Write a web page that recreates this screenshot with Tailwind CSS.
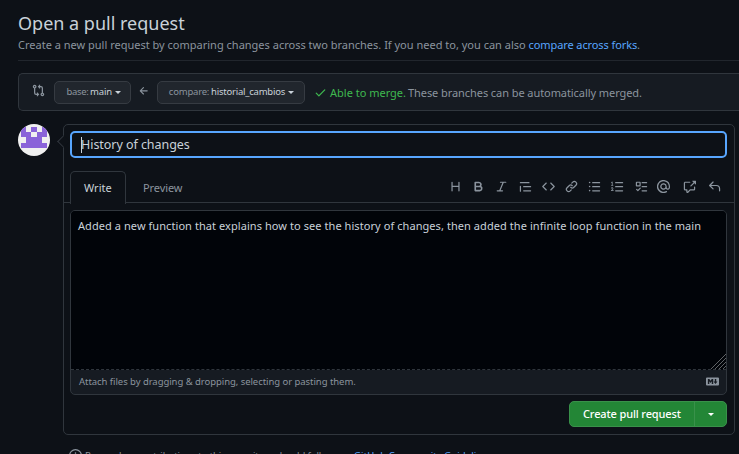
<!DOCTYPE html>
<html lang="en">
<head>
<meta charset="utf-8">
<title>Open a pull request</title>
<script src="https://cdn.jsdelivr.net/npm/@tailwindcss/browser@4"></script>
</head>
<body class="h-[454px] w-[739px] overflow-hidden bg-[#0d1117] font-['Noto_Sans',sans-serif] text-[11px] text-[#8b949e]">
<header class="ml-[18px] h-[61px] border-b border-[#21262d] pt-[11px] whitespace-nowrap">
  <h1 class="h-[25px] text-[18px] leading-[25px] text-[#c9d1d9]">Open a pull request</h1>
  <p class="h-[18px] leading-[18px] tracking-[0.002px]">Create a new pull request by comparing changes across two branches. If you need to, you can also <a class="tracking-[-0.1px] text-[#58a6ff]">compare across forks</a>.</p>
</header>
<section class="mt-3 ml-[18px] flex h-[38px] items-center rounded-l-[5px] border border-r-0 border-[#30363d] bg-[#161b22] whitespace-nowrap">
  <svg class="mt-[-4px] ml-[13px] size-[13px]" viewBox="0 0 16 16" fill="currentColor"><path d="M9.573.677A.25.25 0 0 1 10 .854V2.5h1A2.5 2.5 0 0 1 13.5 5v5.628a2.251 2.251 0 1 1-1.5 0V5a1 1 0 0 0-1-1h-1v1.646a.25.25 0 0 1-.427.177L7.177 3.427a.25.25 0 0 1 0-.354L9.573.677ZM6 12v-1.646a.25.25 0 0 1 .427-.177l2.396 2.396a.25.25 0 0 1 0 .354l-2.396 2.396A.25.25 0 0 1 6 15.146V13.5H5A2.5 2.5 0 0 1 2.5 11V5.372a2.25 2.25 0 1 1 1.5 0V11a1 1 0 0 0 1 1h1Zm-2.75-9.5a.75.75 0 1 0 0 1.5.75.75 0 0 0 0-1.5Zm9.5 9.5a.75.75 0 1 0 0 1.5.75.75 0 0 0 0-1.5Z"/></svg>
  <button class="ml-[9px] flex h-[23px] w-[77px] items-center rounded-[5px] border border-[#363b42] bg-[#21262d] pt-px pl-[10px] text-[9.5px] tracking-[-0.1px]"><span class="w-[25px] tracking-[-0.35px]">base:</span><span class="w-[22px] text-[#c9d1d9]">main</span><i class="ml-[3px] border-x-[3px] border-t-[3px] border-x-transparent border-t-[#c9d1d9]"></i></button>
  <svg class="mt-[-3px] ml-[7px] size-[12px]" viewBox="0 0 16 16" fill="currentColor"><path d="M7.78 12.53a.75.75 0 0 1-1.06 0L2.47 8.28a.75.75 0 0 1 0-1.06l4.25-4.25a.751.751 0 0 1 1.042.018.751.751 0 0 1 .018 1.042L4.81 7h7.44a.75.75 0 0 1 0 1.5H4.81l2.97 2.97a.75.75 0 0 1 0 1.06Z"/></svg>
  <button class="ml-[7px] flex h-[23px] w-[148px] items-center rounded-[5px] border border-[#363b42] bg-[#21262d] pt-px pl-[9px] text-[9.5px] tracking-[-0.1px]"><span class="w-[44px] tracking-[-0.2px]">compare:</span><span class="w-[74px] tracking-[-0.22px] text-[#c9d1d9]">historial_cambios</span><i class="ml-[3px] border-x-[3px] border-t-[3px] border-x-transparent border-t-[#c9d1d9]"></i></button>
  <svg class="ml-[9px] size-[13px] text-[#3fb950]" viewBox="0 0 16 16" fill="currentColor"><path d="M13.78 4.22a.75.75 0 0 1 0 1.06l-7.25 7.25a.75.75 0 0 1-1.06 0L2.22 9.28a.751.751 0 0 1 .018-1.042.751.751 0 0 1 1.042-.018L6 10.94l6.72-6.72a.75.75 0 0 1 1.06 0Z"/></svg>
  <span class="mt-[2px] ml-[3px] w-[76px] text-[#3fb950]">Able to merge.</span><span class="mt-[2px] ml-[2px] tracking-[-0.07px]">These branches can be automatically merged.</span>
</section>
<div class="mt-[13px] flex">
  <svg class="ml-[18px] size-8 rounded-full bg-[#f0f0f0]" viewBox="0 0 6 6" fill="#8a63d9" shape-rendering="crispEdges"><path d="M.5.5h1v1h1v-1h1v1h1v-1h1v2h-1v1h1v1h-5v-1h1v-1h-1z"/><path fill="#f0f0f0" d="M2.5 1.5h1v1h-1z"/></svg>
  <main class="relative ml-[13px] h-[311px] w-[672px] rounded-[5px] border border-[#30363d]">
    <i class="absolute top-[12px] left-[-5px] size-[9px] rotate-45 border-b border-l border-[#30363d] bg-[#0d1117]"></i>
    <div class="relative mt-[6px] ml-[6px] flex h-[27px] w-[657px] items-center rounded-[5px] border-2 border-[#58a6ff] bg-[#0d1117] pl-[9px] text-[12.5px] text-[#c9d1d9]"><i class="h-[16px] w-px bg-[#c9d1d9]"></i><span class="mt-[2px] ml-[-1px] tracking-[-0.05px]">History of changes</span></div>
    <div class="mt-[13px] flex h-8 items-center border-b border-[#30363d] pl-[6px]">
      <div class="mb-[-1px] flex h-[33px] w-[56px] items-center rounded-t-[5px] border border-b-0 border-[#30363d] bg-[#0d1117] pt-[2px] pl-[13px] text-[#c9d1d9]">Write</div>
      <span class="mt-[3px] ml-[17px] tracking-[-0.1px]">Preview</span>
      <div class="mt-[-1px] ml-auto flex items-center pr-[13px] [&>svg]:size-[13px] [&>svg]:fill-current">
        <svg viewBox="0 0 16 16"><path d="M3.75 2a.75.75 0 0 1 .75.75V7h7V2.75a.75.75 0 0 1 1.5 0v10.5a.75.75 0 0 1-1.5 0V8.5h-7v4.75a.75.75 0 0 1-1.5 0V2.75A.75.75 0 0 1 3.75 2Z"/></svg>
        <svg class="ml-[10px]" viewBox="0 0 16 16"><path d="M4 2h4.5a3.501 3.501 0 0 1 2.852 5.53A3.499 3.499 0 0 1 9.5 14H4a1 1 0 0 1-1-1V3a1 1 0 0 1 1-1Zm1 7v3h4.5a1.5 1.5 0 0 0 0-3Zm3.5-2a1.5 1.5 0 0 0 0-3H5v3Z"/></svg>
        <svg class="ml-[10px]" viewBox="0 0 16 16"><path d="M6 2.75A.75.75 0 0 1 6.75 2h6.5a.75.75 0 0 1 0 1.5h-2.505l-3.858 9H9.25a.75.75 0 0 1 0 1.5h-6.5a.75.75 0 0 1 0-1.5h2.505l3.858-9H6.75A.75.75 0 0 1 6 2.75Z"/></svg>
        <svg class="ml-[11px]" viewBox="0 0 16 16"><path d="M1.75 2.5h10.5a.75.75 0 0 1 0 1.5H1.75a.75.75 0 0 1 0-1.5Zm4 5h8.5a.75.75 0 0 1 0 1.5h-8.5a.75.75 0 0 1 0-1.5Zm0 5h8.5a.75.75 0 0 1 0 1.5h-8.5a.75.75 0 0 1 0-1.5ZM2.5 7.75v6a.75.75 0 0 1-1.5 0v-6a.75.75 0 0 1 1.5 0Z"/></svg>
        <svg class="ml-[10px]" viewBox="0 0 16 16"><path d="m11.28 3.22 4.25 4.25a.75.75 0 0 1 0 1.06l-4.25 4.25a.75.75 0 0 1-1.06-1.06L13.94 8l-3.72-3.72a.75.75 0 0 1 1.06-1.06Zm-6.56 0a.75.75 0 0 1 1.06 1.06L2.06 8l3.72 3.72a.75.75 0 0 1-1.06 1.06L.47 8.53a.75.75 0 0 1 0-1.06Z"/></svg>
        <svg class="ml-[10px]" viewBox="0 0 16 16"><path d="m7.775 3.275 1.25-1.25a3.5 3.5 0 1 1 4.95 4.95l-2.5 2.5a3.5 3.5 0 0 1-4.95 0 .751.751 0 0 1 1.06-1.06 1.998 1.998 0 0 0 2.83 0l2.5-2.5a2.002 2.002 0 0 0-2.83-2.83l-1.25 1.25a.751.751 0 0 1-1.06-1.06Zm-4.69 9.64a1.998 1.998 0 0 0 2.83 0l1.25-1.25a.751.751 0 0 1 1.06 1.06l-1.25 1.25a3.5 3.5 0 1 1-4.95-4.95l2.5-2.5a3.5 3.5 0 0 1 4.95 0 .751.751 0 0 1-1.06 1.06 1.998 1.998 0 0 0-2.83 0l-2.5 2.5a1.998 1.998 0 0 0 0 2.83Z"/></svg>
        <svg class="ml-[10px]" viewBox="0 0 16 16"><path d="M5.75 2.5h8.5a.75.75 0 0 1 0 1.5h-8.5a.75.75 0 0 1 0-1.5Zm0 5h8.5a.75.75 0 0 1 0 1.5h-8.5a.75.75 0 0 1 0-1.5Zm0 5h8.5a.75.75 0 0 1 0 1.5h-8.5a.75.75 0 0 1 0-1.5ZM2 14a1 1 0 1 1 0-2 1 1 0 0 1 0 2Zm1-6a1 1 0 1 1-2 0 1 1 0 0 1 2 0ZM2 4a1 1 0 1 1 0-2 1 1 0 0 1 0 2Z"/></svg>
        <svg class="ml-[10px]" viewBox="0 0 16 16"><path d="M5 3.25a.75.75 0 0 1 .75-.75h8.5a.75.75 0 0 1 0 1.5h-8.5A.75.75 0 0 1 5 3.25Zm0 5a.75.75 0 0 1 .75-.75h8.5a.75.75 0 0 1 0 1.5h-8.5A.75.75 0 0 1 5 8.25Zm0 5a.75.75 0 0 1 .75-.75h8.5a.75.75 0 0 1 0 1.5h-8.5a.75.75 0 0 1-.75-.75ZM.924 10.32a.5.5 0 0 1-.851-.525c.162-.266.506-.636 1.15-.728.436-.062.892.06 1.217.32.318.254.56.68.56 1.183 0 .57-.33 1-.61 1.26l-.73.67H3a.5.5 0 0 1 0 1H.5a.5.5 0 0 1-.34-.87l1.7-1.56c.3-.28.22-.8-.17-.96-.33-.13-.6-.02-.766.21ZM2.003 2.5V6h.503a.5.5 0 0 1 0 1H.5a.5.5 0 0 1 0-1h.503V3.308l-.28.14a.5.5 0 0 1-.446-.895l1.003-.5a.5.5 0 0 1 .723.447Z"/></svg>
        <svg class="ml-[11px]" viewBox="0 0 16 16"><path d="M2 2h4a1 1 0 0 1 1 1v4a1 1 0 0 1-1 1H2a1 1 0 0 1-1-1V3a1 1 0 0 1 1-1Zm.5 1.5v3h3v-3Zm6.25-1h5.5a.75.75 0 0 1 0 1.5h-5.5a.75.75 0 0 1 0-1.5Zm0 5h5.5a.75.75 0 0 1 0 1.5h-5.5a.75.75 0 0 1 0-1.5Zm0 5h5.5a.75.75 0 0 1 0 1.5h-5.5a.75.75 0 0 1 0-1.5Zm-1.72-1.95-3 3a.75.75 0 0 1-1.06 0l-1.5-1.5a.75.75 0 0 1 1.06-1.06l.97.97 2.47-2.47a.75.75 0 0 1 1.06 1.06Z"/></svg>
        <svg class="ml-[9px]" viewBox="0 0 16 16"><path d="M4.75 2.37a6.501 6.501 0 0 0 6.5 11.26.75.75 0 0 1 .75 1.298A7.999 7.999 0 0 1 .989 4.148 8 8 0 0 1 16 7.75v1.5a2.75 2.75 0 0 1-5.072 1.475 3.999 3.999 0 0 1-6.65-4.19A4 4 0 0 1 12 8v1.25a1.25 1.25 0 0 0 2.5 0V7.867a6.5 6.5 0 0 0-9.75-5.496ZM10.5 8a2.5 2.5 0 1 0-5 0 2.5 2.5 0 0 0 5 0Z"/></svg>
        <svg class="ml-[13px]" viewBox="0 0 16 16"><path d="M2.75 3.5a.25.25 0 0 0-.25.25v7.5c0 .138.112.25.25.25h2a.75.75 0 0 1 .75.75v2.19l2.72-2.72a.749.749 0 0 1 .53-.22h4.5a.25.25 0 0 0 .25-.25v-2.5a.75.75 0 0 1 1.5 0v2.5A1.75 1.75 0 0 1 13.25 13H9.06l-2.573 2.573A1.458 1.458 0 0 1 4 14.543V13H2.75A1.75 1.75 0 0 1 1 11.25v-7.5C1 2.784 1.784 2 2.75 2h5.5a.75.75 0 0 1 0 1.5ZM16 1.25v4.146a.25.25 0 0 1-.427.177L14.03 4.03l-3.75 3.75a.749.749 0 0 1-1.06-1.06l3.75-3.75-1.543-1.543A.25.25 0 0 1 11.604 1h4.146a.25.25 0 0 1 .25.25Z"/></svg>
        <svg class="ml-[12px]" viewBox="0 0 16 16"><path d="M6.78 1.97a.75.75 0 0 1 0 1.06L3.81 6h6.44A4.75 4.75 0 0 1 15 10.75v2.5a.75.75 0 0 1-1.5 0v-2.5a3.25 3.25 0 0 0-3.25-3.25H3.81l2.97 2.97a.75.75 0 0 1-1.06 1.06L1.47 7.28a.75.75 0 0 1 0-1.06l4.25-4.25a.75.75 0 0 1 1.06 0Z"/></svg>
      </div>
    </div>
    <div class="mt-[7px] ml-[6px] h-[185px] w-[657px] overflow-hidden rounded-[5px] border border-[#30363d] bg-[#161b22]">
      <div class="relative h-[159px] border-b border-dashed border-[#30363d] bg-[#010409] pt-[6px] pl-[7px] leading-[18px] tracking-[0.068px] whitespace-nowrap text-[#c9d1d9]">Added a new function that explains how to see the history of changes, then added the infinite loop function in the main
        <svg class="absolute right-0 bottom-0 size-[15px]" viewBox="0 0 15 15" stroke="#6b6e72" stroke-width=".9"><path d="M0 15 15 0M4 15 15 4M8 15l7-7M12 15l3-3"/></svg>
      </div>
      <div class="flex h-6 items-center justify-between pt-px pr-[7px] pl-[8px] text-[9.5px] tracking-[-0.05px]">Attach files by dragging &amp; dropping, selecting or pasting them.
        <svg class="mt-[-3px] h-[9px] w-[13px]" viewBox="0 0 16 10" fill="currentColor"><path fill-rule="evenodd" d="M1.2 0h13.6Q16 0 16 1.2v7.6Q16 10 14.8 10H1.2Q0 10 0 8.800V1.200Q0 0 1.200 0ZM2.300 2v6h1.800V4.800L5.600 6.700 7.100 4.800V8h1.800V2H7.100L5.600 4 4.100 2Zm8.500 0v3H9.300L11.700 8.200 14.100 5h-1.500V2Z"/></svg>
      </div>
    </div>
    <button class="mt-[6px] ml-[505px] flex h-[26px] w-[158px] items-center rounded-[5px] border border-[#39914a] bg-[#238636] text-white">
      <span class="flex h-full w-[125px] items-center border-r border-[#39914a] pt-px pl-[13px] font-medium tracking-[-0.13px]">Create pull request</span>
      <i class="ml-[13px] border-x-[3px] border-t-[3px] border-x-transparent border-t-white"></i>
    </button>
  </main>
</div>
<footer class="mt-[12px] ml-[69px] flex h-[16px] items-center whitespace-nowrap">
  <svg class="mt-[1px] size-[13px]" viewBox="0 0 16 16" fill="currentColor"><path d="M0 8a8 8 0 1 1 16 0A8 8 0 0 1 0 8Zm8-6.500a6.500 6.500 0 1 0 0 13 6.500 6.500 0 0 0 0-13ZM6.500 7.750A.75.75 0 0 1 7.250 7h1a.75.75 0 0 1 .75.75v2.750h.25a.75.75 0 0 1 0 1.500h-2a.75.75 0 0 1 0-1.500h.25v-2h-.25a.75.75 0 0 1-.75-.75ZM8 6a1 1 0 1 1 0-2 1 1 0 0 1 0 2Z"/></svg>
  <span class="mt-[3px] ml-[3px] text-[9.5px] tracking-[-0.08px]">Remember, contributions to this repository should follow our <a class="tracking-[0.1px] text-[#58a6ff]">GitHub Community Guidelines</a>.</span>
</footer>
</body>
</html>
